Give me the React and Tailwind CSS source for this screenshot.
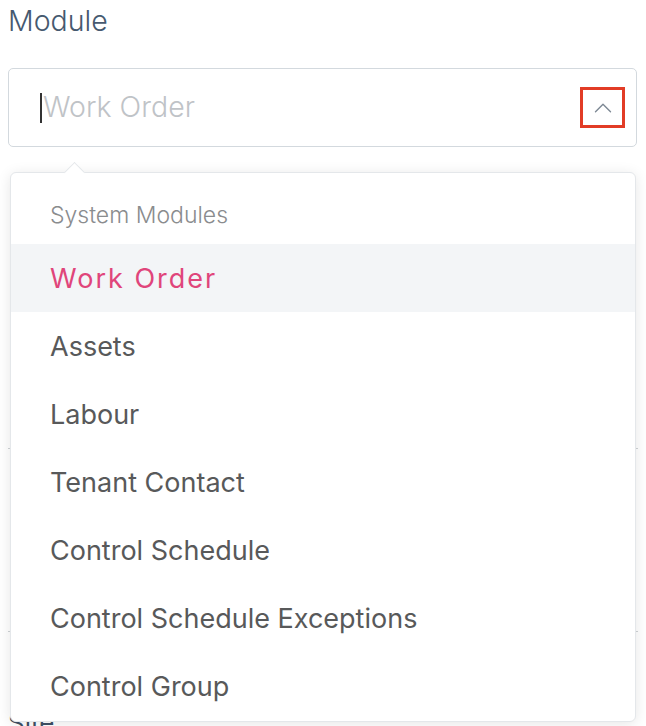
import { ChevronUp } from "lucide-react";

const modulos = [
  "Work Order",
  "Assets",
  "Labour",
  "Tenant Contact",
  "Control Schedule",
  "Control Schedule Exceptions",
  "Control Group",
];

function App() {
  return (
    <div
      className="relative w-full h-[726px] overflow-hidden bg-white"
      style={{ fontFamily: "Inter, 'Noto Sans', sans-serif" }}
    >
      {/* FORMULARIO DE FONDO */}
      <div className="px-2 pt-[4px]">
        <label className="block text-[28.5px] leading-[34px] font-light text-[#46596f]">Module</label>

        <div className="mt-[30px] h-[79px] w-[629px] border border-[#d3d9de] rounded-[5px] flex items-center pl-[31px] pr-[11px]">
          <span className="w-[2px] h-[30px] bg-[#333]" />
          <span className="ml-[1px] text-[28.5px] font-light text-[#bfc3c7]">Work Order</span>
          <div className="ml-auto w-[45px] h-[41px] border-[3px] border-[#e23c26] flex items-center justify-center">
            <ChevronUp size={30} strokeWidth={1.1} className="text-[#7d8894]" />
          </div>
        </div>

        <div className="mt-[301px] h-[1px] w-full bg-[#cfd3d6]" />
        <div className="mt-[182px] h-[1px] w-full bg-[#cfd3d6]" />
        <div className="mt-[76px] text-[26px] leading-[30px] text-[#3f5166]">Site</div>
      </div>

      {/* DROPDOWN */}
      <div className="absolute left-[10px] top-[172px] w-[626px] h-[550px] bg-white border border-[#e4e7ea] rounded-[6px] shadow-[0_2px_14px_rgba(0,0,0,0.10)]">
        <div className="absolute -top-[8px] left-[56px] w-[15px] h-[15px] rotate-45 bg-white border-l border-t border-[#e4e7ea]" />
        <div className="relative pt-[27px]">
          <div className="px-[39px] text-[23px] leading-[30px] font-light text-[#8a8c8e] mb-[14px]">System Modules</div>
          {modulos.map((m, i) => (
            <div
              key={m}
              className={
                i === 0
                  ? "h-[68px] flex items-center pt-[3px] px-[39px] bg-[#f3f5f7] text-[27px] tracking-[2px] text-[#e0457b]"
                  : "h-[68px] flex items-center pt-[3px] px-[39px] text-[27px] text-[#58595a]"
              }
            >
              {m}
            </div>
          ))}
        </div>
      </div>
    </div>
  );
}

export default App;
